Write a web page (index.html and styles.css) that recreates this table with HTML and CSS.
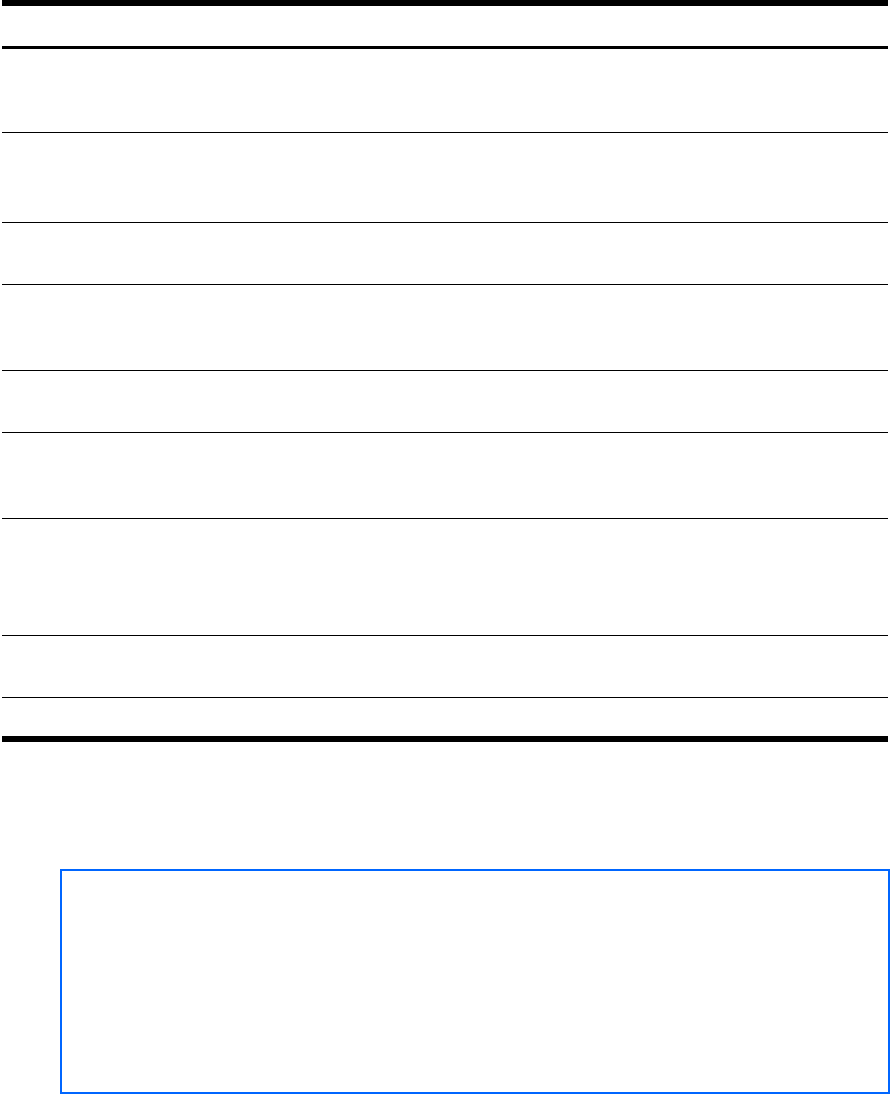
FILE: index.html
```html
<!DOCTYPE html>
<html lang="en">
<head>
<meta charset="utf-8">
<title>Table</title>
<link rel="stylesheet" href="styles.css">
</head>
<body>
<div class="sheet">
  <div class="table">
    <div class="row head"></div>
    <div class="row r83"></div>
    <div class="row r89"></div>
    <div class="row r61"></div>
    <div class="row r85"></div>
    <div class="row r61"></div>
    <div class="row r85"></div>
    <div class="row r116"></div>
    <div class="row r61"></div>
    <div class="row last"></div>
  </div>
  <div class="note"></div>
</div>
</body>
</html>
```
FILE: styles.css
```css
html, body {
  margin: 0;
  padding: 0;
  background: #ffffff;
  font-family: "Liberation Sans", Arial, sans-serif;
}
.sheet {
  display: flex;
  flex-direction: column;
  width: 890px;
}
.table {
  margin-left: 2px;
  width: 886px;
  border-top: 6px solid #000;
  border-bottom: 6px solid #000;
  display: flex;
  flex-direction: column;
}
.row {
  border-bottom: 1px solid #000;
}
.head {
  height: 40px;
  border-bottom: 3px solid #000;
}
.r83 { height: 83px; }
.r89 { height: 89px; }
.r61 { height: 61px; }
.r85 { height: 85px; }
.r116 { height: 116px; }
.last {
  height: 38px;
  border-bottom: none;
}
.note {
  margin-top: 127px;
  margin-left: 60px;
  width: 830px;
  height: 225px;
  box-sizing: border-box;
  border: 2px solid #0066ff;
}
```
